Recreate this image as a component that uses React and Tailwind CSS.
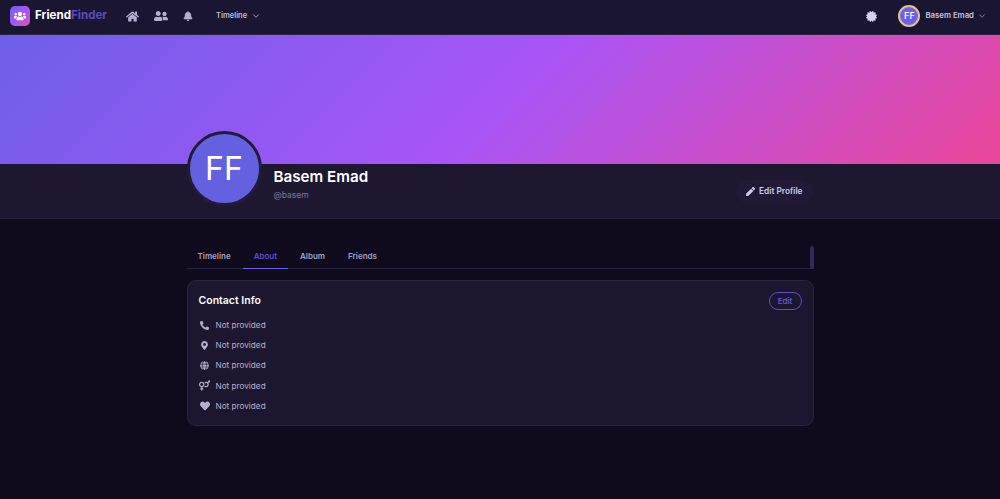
import React from "react";
import {
  FaHome,
  FaUsers,
  FaUserFriends,
  FaBell,
  FaCertificate,
  FaPen,
  FaPhoneAlt,
  FaMapMarkerAlt,
  FaGlobe,
  FaVenusMars,
  FaHeart,
} from "react-icons/fa";
import { ChevronDown } from "lucide-react";

const CONTACT_ICONS = [
  { Icon: FaPhoneAlt, size: 9 },
  { Icon: FaMapMarkerAlt, size: 9 },
  { Icon: FaGlobe, size: 9 },
  { Icon: FaVenusMars, size: 11 },
  { Icon: FaHeart, size: 10 },
];
const TABS = ["Timeline", "About", "Album", "Friends"];

const Logo = () => (
  <div className="w-5 h-5 rounded-[5px] bg-gradient-to-br from-[#6d5fe8] via-[#a855f7] to-[#db4fb0] flex items-center justify-center">
    <FaUsers className="text-white" size={12} />
  </div>
);

const Header = () => (
  <header className="h-[35px] bg-[#1a1530] border-b border-[#2a2245] flex items-center pb-[2px] pl-[10px] pr-[13px]">
    <Logo />
    <span className="ml-[5px] text-[11.6px] font-bold text-white">
      Friend<span className="text-[#5b4bc4]">Finder</span>
    </span>
    <nav className="flex items-center ml-[19px] gap-[15px] text-[#b5b0d0]">
      <FaHome size={13} />
      <FaUserFriends size={14} />
      <FaBell size={10} />
    </nav>
    <div className="ml-[23px] flex items-center gap-1 text-[7.5px] font-semibold text-[#c0bbdc]">
      Timeline
      <ChevronDown size={10} />
    </div>
    <FaCertificate className="ml-auto text-[#d6d2ee]" size={11} />
    <div className="ml-[21px] w-[22px] h-[22px] rounded-full bg-[#6d5fe8] border-2 border-[#e2c48a] flex items-center justify-center text-[9px] font-medium text-white">
      FF
    </div>
    <span className="ml-[5px] text-[7.8px] font-semibold text-[#c9c5e2]">Basem Emad</span>
    <ChevronDown className="ml-[3px] text-[#8f8aab]" size={10} />
  </header>
);

const ProfileBar = () => (
  <section className="h-[55px] bg-[#1d182f] border-b border-[#2a2440]">
    <div className="w-[627px] mx-auto flex items-start">
      <div className="-mt-[33px] w-[75px] h-[75px] rounded-full bg-[#6361e0] border-[3px] border-[#221b3a] flex items-center justify-center text-[32px] text-white shrink-0">
        FF
      </div>
      <div className="ml-[12px] pt-[3px]">
        <h1 className="text-[15.2px] leading-[20px] font-semibold text-white">Basem Emad</h1>
        <p className="mt-[2px] text-[8.5px] leading-[12px] text-[#7d7895]">@basem</p>
      </div>
      <button className="ml-auto mt-[16px] mr-[1px] h-[23px] px-[10px] rounded-full bg-[#201a36] flex items-center gap-[4px] text-[8.3px] font-semibold text-[#cfcbe6]">
        <FaPen size={9} />
        Edit Profile
      </button>
    </div>
  </section>
);

const Tabs = () => (
  <div className="relative flex items-stretch h-[23px] border-b border-[#2a2440] pl-[2px]">
    {TABS.map((t) => (
      <div
        key={t}
        className={`flex items-start pt-[4px] px-[11px] mr-[1px] text-[8px] leading-[12px] font-semibold ${
          t === "About" ? "text-[#5f4bd8] border-b border-[#6d5fe8] -mb-px" : "text-[#a5a0c0]"
        } ${t === "Timeline" ? "pl-[9px]" : ""}`}
      >
        {t}
      </div>
    ))}
    <div className="absolute right-0 top-0 w-[4px] h-[23px] rounded-full bg-[#312a5a]" />
  </div>
);

const ContactCard = () => (
  <div className="mt-[11px] h-[146px] rounded-[9px] bg-[#1c172e] border border-[#2a2440] px-[11px] pt-[12px]">
    <div className="flex items-start justify-between">
      <h2 className="text-[10.5px] leading-[16px] font-semibold text-white">Contact Info</h2>
      <button className="-mt-px h-[18px] w-[33px] rounded-full border border-[#5f4bd8] text-[8px] font-medium text-[#6f5ce6]">
        Edit
      </button>
    </div>
    <ul className="mt-[9px] flex flex-col gap-[8.25px]">
      {CONTACT_ICONS.map(({ Icon, size }, i) => (
        <li key={i} className="flex items-center h-[12px] text-[8.2px] text-[#b5b0d0]">
          <span className="w-[17px] flex justify-center pr-[5px]">
            <Icon size={size} />
          </span>
          Not provided
        </li>
      ))}
    </ul>
  </div>
);

const App = () => (
  <div className="min-h-[499px] bg-[#0f0b1c] font-['Inter',sans-serif]">
    <Header />
    <div className="h-[129px] bg-[linear-gradient(135deg,#6d5fe8,#a855f7,#ec4899)]" />
    <ProfileBar />
    <main className="w-[627px] mx-auto pt-[27px]">
      <Tabs />
      <ContactCard />
    </main>
  </div>
);

export default App;
